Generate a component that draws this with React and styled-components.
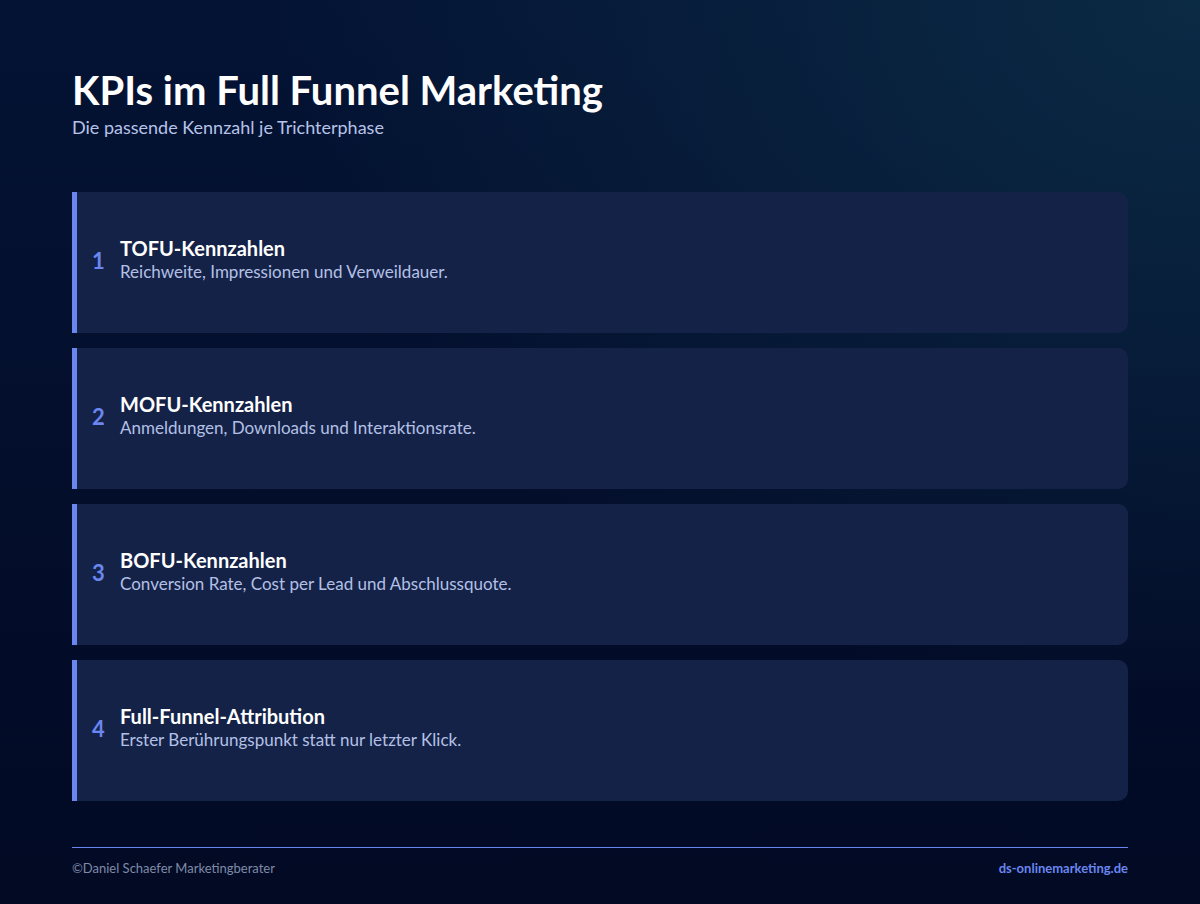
import styled, { createGlobalStyle } from "styled-components";

const Global = createGlobalStyle`
  html, body { margin: 0; padding: 0; }
  body {
    font-family: Lato, "Noto Sans", sans-serif;
    background: #020a24;
  }
`;

const items = [
  ["TOFU-Kennzahlen", "Reichweite, Impressionen und Verweildauer."],
  ["MOFU-Kennzahlen", "Anmeldungen, Downloads und Interaktionsrate."],
  ["BOFU-Kennzahlen", "Conversion Rate, Cost per Lead und Abschlussquote."],
  ["Full-Funnel-Attribution", "Erster Berührungspunkt statt nur letzter Klick."],
];

const App = () => (
  <Page>
    <Global />
    <Header>
      <h1>KPIs im Full Funnel Marketing</h1>
      <p>Die passende Kennzahl je Trichterphase</p>
    </Header>
    <List>
      {items.map(([title, text], i) => (
        <Card key={title}>
          <Num>{i + 1}</Num>
          <div>
            <CardTitle>{title}</CardTitle>
            <CardText>{text}</CardText>
          </div>
        </Card>
      ))}
    </List>
    <Footer>
      <span>©Daniel Schaefer Marketingberater</span>
      <strong>ds-onlinemarketing.de</strong>
    </Footer>
  </Page>
);

export default App;

const Page = styled.div`
  width: 1200px;
  height: 904px;
  box-sizing: border-box;
  padding: 67px 72px 0;
  background:
    radial-gradient(ellipse at 100% 0%, #0b2a44 0%, transparent 55%),
    linear-gradient(180deg, #041334 0%, #020a24 100%);
  display: flex;
  flex-direction: column;
`;

const Header = styled.header`
  h1 {
    margin: 0;
    font-size: 40px;
    font-weight: 700;
    color: #ffffff;
    line-height: 46px;
  }
  p {
    margin: 3px 0 0;
    font-size: 18px;
    color: #b7c3e8;
  }
`;

const List = styled.div`
  margin-top: 54px;
  display: flex;
  flex-direction: column;
  gap: 15px;
`;

const Card = styled.div`
  height: 141px;
  box-sizing: border-box;
  background: #152247;
  border-left: 5px solid #6a86f0;
  border-radius: 0 10px 10px 0;
  display: flex;
  align-items: center;
  gap: 16px;
  padding: 0 0 8px 15px;
`;

const Num = styled.span`
  font-size: 22px;
  font-weight: 700;
  color: #6a86f0;
  width: 12px;
  padding-top: 4px;
`;

const CardTitle = styled.div`
  font-size: 20px;
  font-weight: 700;
  color: #ffffff;
  line-height: 26px;
`;

const CardText = styled.div`
  font-size: 17px;
  color: #b3c0e6;
  line-height: 22px;
`;

const Footer = styled.footer`
  margin-top: 46px;
  border-top: 1px solid #6a86f0;
  padding-top: 12px;
  display: flex;
  justify-content: space-between;
  font-size: 13px;
  color: #7f8aa8;
  strong { color: #6a86f0; font-weight: 700; }
`;
